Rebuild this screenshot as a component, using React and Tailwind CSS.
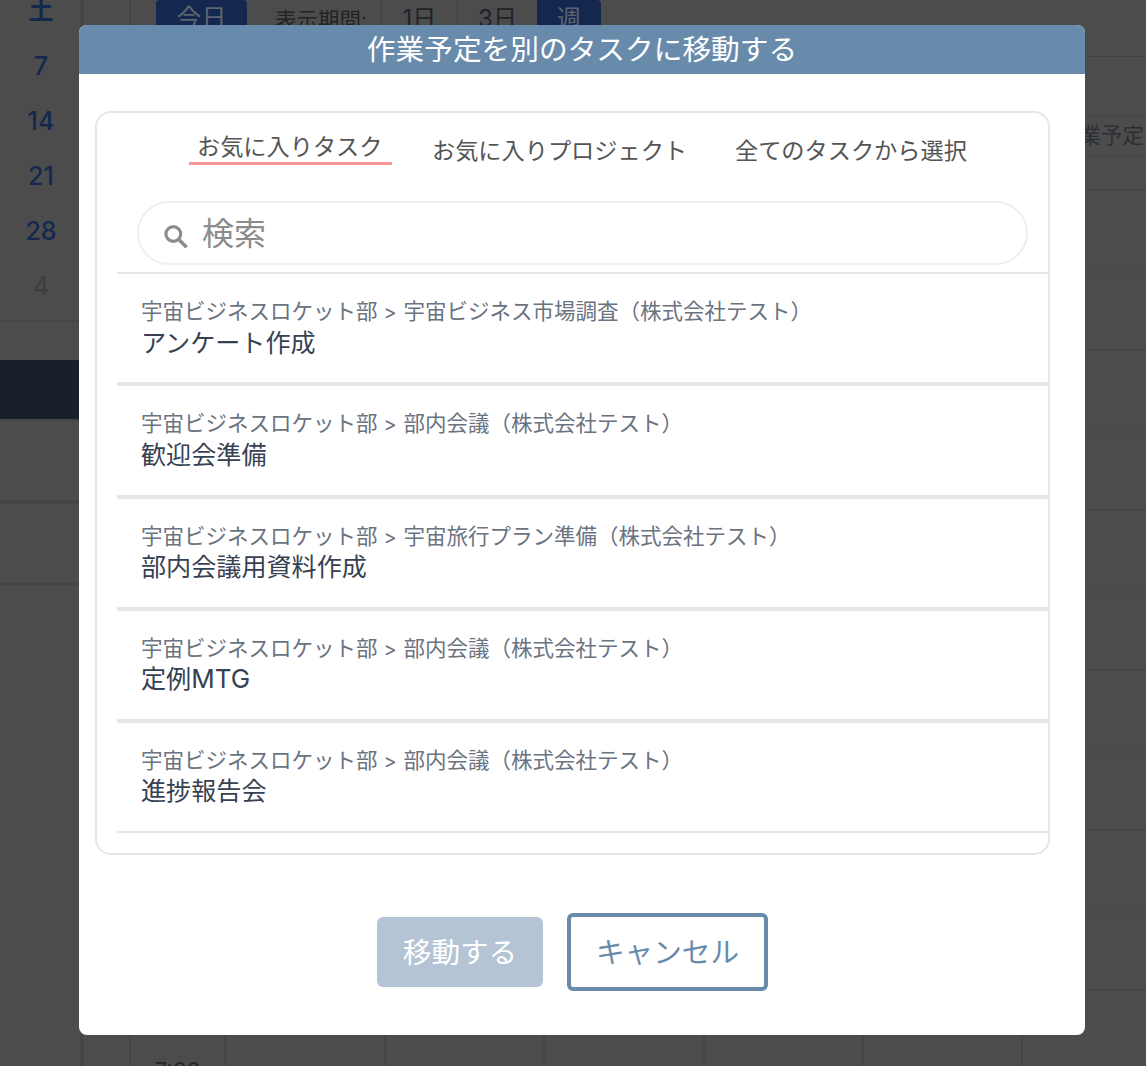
const DEPT = '宇宙ビジネスロケット部';

const TASKS = [
  { project: '宇宙ビジネス市場調査（株式会社テスト）', name: 'アンケート作成', height: 'h-[112px]', nameLeading: 'leading-[30px]' },
  { project: '部内会議（株式会社テスト）', name: '歓迎会準備', height: 'h-[113px]', nameLeading: 'leading-[30px]' },
  { project: '宇宙旅行プラン準備（株式会社テスト）', name: '部内会議用資料作成', height: 'h-[112px]', nameLeading: 'leading-[28px]' },
  { project: '部内会議（株式会社テスト）', name: '定例MTG', height: 'h-[112px]', nameLeading: 'leading-[28px]' },
  { project: '部内会議（株式会社テスト）', name: '進捗報告会', height: 'h-[112px]', nameLeading: 'leading-[28px]' },
];

const HOURS = [0, 1, 2, 3, 4, 5];

function Sidebar() {
  return (
    <aside className="flex w-20 shrink-0 flex-col">
      <div className="flex h-[322px] flex-col border-b-2 border-[#454545] text-center text-[25px] text-[#14284f]">
        <div className="-mt-[18px] h-[57px] pl-[2px] leading-[56px] font-bold">土</div>
        {['7', '14', '21', '28'].map((d) => (
          <div key={d} className="h-[55px] pl-[2px] leading-[55px] font-[450]">{d}</div>
        ))}
        <div className="h-[55px] pl-[2px] leading-[55px] font-[450] text-[#3d3e40]">4</div>
      </div>
      <div className="h-[38px]" />
      <div className="h-[59px] bg-[#19202a]" />
      <div className="h-[85px] border-t-2 border-b-4 border-[#454545]" />
      <div className="h-[81px] border-b-2 border-[#454545]" />
    </aside>
  );
}

function Toolbar() {
  return (
    <div className="flex h-[57px] items-start border-b border-[#424242]">
      <div className="ml-[25px] h-[37px] w-[91px] rounded bg-[#14284f] text-center text-[25px] leading-[37px] text-[#5c6472]">今日</div>
      <div className="ml-[28px] w-[97px] pt-[5px] text-[21.5px] leading-[30px] whitespace-nowrap text-[#232323]">表示期間:</div>
      <div className="ml-[9px] flex h-[37px] text-center text-[24px] leading-[38px] text-[#1e232b]">
        <div className="w-[76px] border-l border-[#414141]">1日</div>
        <div className="w-[80px] border-l border-[#414141]">3日</div>
        <div className="w-[64px] rounded-r bg-[#14284f] text-[#5c6472]">週</div>
      </div>
    </div>
  );
}

function Calendar() {
  return (
    <main className="flex min-w-0 grow flex-col">
      <Toolbar />
      <div className="h-[59px] border-b border-[#454545]" />
      <div className="flex h-[41px] items-center justify-end overflow-hidden border-b border-[#454545] pr-[2px] pb-[2px] text-[21.5px] whitespace-nowrap text-[#2b2e34]">作業予定</div>
      <div className="h-[34px] border-b-2 border-[#454545]" />
      <div className="flex h-[875px]">
        <div className="flex w-[93px] shrink-0 items-end justify-center overflow-hidden">
          <span className="-mb-[20px] text-[22px] leading-[32px] text-[#24252e]">7:00</span>
        </div>
        <div className="grid grow grid-cols-[160px_159px_160px_159px_159px_1fr]">
          {[0, 1, 2, 3, 4, 5].map((c) => (
            <div key={c} className="border-l-2 border-[#454545]">
              {HOURS.map((h) => (
                <div key={h}>
                  <div className="h-[82px] border-b-2 border-dotted border-[#464646]" />
                  <div className="h-[78px] border-b-2 border-[#454545]" />
                </div>
              ))}
            </div>
          ))}
        </div>
      </div>
    </main>
  );
}

function SearchIcon() {
  return (
    <svg viewBox="0 0 24 24" className="h-6 w-6" fill="none" stroke="#8c8c8c">
      <circle cx="9.3" cy="9" r="7.4" strokeWidth="3.2" />
      <path d="M14.5 14.2 L22.6 22.2" strokeWidth="3.6" />
    </svg>
  );
}

function Tabs() {
  return (
    <div className="flex h-[88px] items-start pl-[92px] text-[23.2px] whitespace-nowrap text-[#545454]">
      <div className="mt-[16px] h-[36px] w-[203px] border-b-3 border-[#ff9494] pl-[8px] leading-[36px]">お気に入りタスク</div>
      <div className="mt-[20px] ml-[40px] w-[263px] leading-[36px]">お気に入りプロジェクト</div>
      <div className="mt-[20px] ml-[40px] leading-[36px]">全てのタスクから選択</div>
    </div>
  );
}

function MoveDialog() {
  return (
    <div className="absolute top-[25px] left-[79px] flex h-[1010px] w-[1006px] flex-col overflow-hidden rounded-lg bg-white">
      <h1 className="h-[49px] bg-[#698bab] text-center text-[28.7px] leading-[50px] text-white">作業予定を別のタスクに移動する</h1>
      <section className="mt-[37px] ml-4 flex h-[744px] w-[955px] flex-col rounded-2xl border-2 border-[#e6e6eb]">
        <Tabs />
        <div className="ml-10 flex h-16 w-[891px] shrink-0 items-center rounded-full border-2 border-[#efefef] pl-[25px]">
          <div className="pt-[7px]"><SearchIcon /></div>
          <span className="ml-[14px] pt-[2px] text-[32px] leading-[58px] text-[#8c8c8c]">検索</span>
        </div>
        <ul className="mt-[7px] ml-5">
          {TASKS.map((t) => (
            <li key={t.name} className={`${t.height} border-y-2 border-[#e6e6e6] pt-[21px] pl-6`}>
              <div className="text-[21.5px] leading-8 text-[#6b7280]">
                {DEPT}<span className="inline-block w-[26px] pr-px text-center text-[20px]">&gt;</span>{t.project}
              </div>
              <div className={`${t.nameLeading} text-[25.1px] text-[#374151]`}>
                {t.name.replace('MTG', '')}
                {t.name.endsWith('MTG') && <span className="text-[26px]">MTG</span>}
              </div>
            </li>
          ))}
        </ul>
      </section>
      <div className="mt-[58px] ml-[298px] flex items-center gap-6 text-[28.6px]">
        <button className="h-[70px] w-[166px] rounded-md bg-[#b5c4d5] pt-[2px] text-white">移動する</button>
        <button className="h-[78px] w-[201px] rounded-md border-4 border-[#698bab] pt-[2px] text-[#698bab]">キャンセル</button>
      </div>
    </div>
  );
}

export default function App() {
  return (
    <div className="relative flex h-[1066px] w-[1146px] overflow-hidden bg-[#4c4c4c] font-['Inter','Noto_Sans_CJK_JP',sans-serif]">
      <Sidebar />
      <div className="w-[51px] shrink-0 border-r-2 border-l-4 border-[#454545]" />
      <Calendar />
      <MoveDialog />
    </div>
  );
}
